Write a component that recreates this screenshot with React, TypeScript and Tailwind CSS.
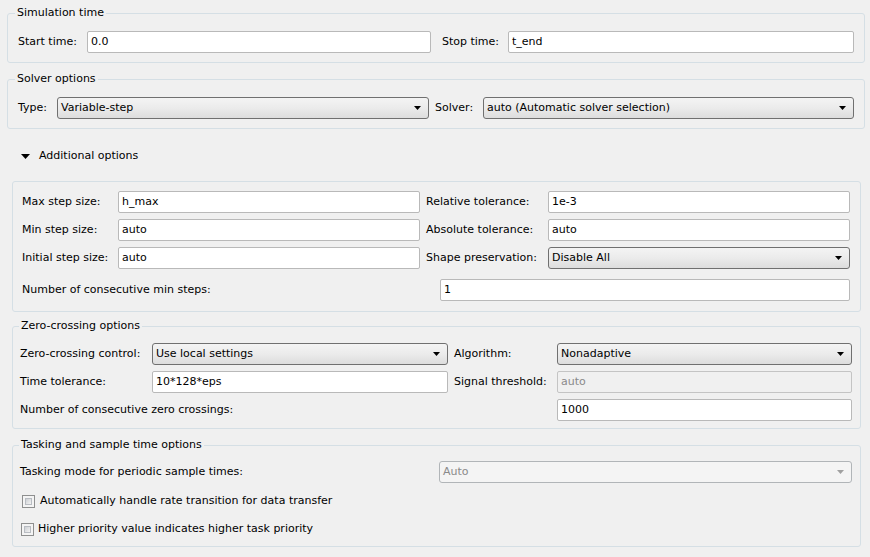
import React from 'react'

// Simulink-style solver configuration pane (Windows 7 look)

const TextBox = ({ value, disabled = false, className = '' }: { value: string; disabled?: boolean; className?: string }) => (
  <div
    className={`h-[22px] flex items-center pl-[3px] rounded-[2px] border ${
      disabled ? 'bg-[#f0f0f0] border-[#c4c4c4] text-[#8a8a8a]' : 'bg-white border-[#b9b9b9] text-black'
    } ${className}`}
  >
    {value}
  </div>
)

const Combo = ({ value, disabled = false, className = '' }: { value: string; disabled?: boolean; className?: string }) => (
  <div
    className={`h-[22px] flex items-center justify-between pl-[3px] pr-[7px] rounded-[3px] border ${
      disabled
        ? 'bg-[#f4f4f4] border-[#b1b5b8] text-[#8a8a8a]'
        : 'bg-gradient-to-b from-[#f4f4f4] via-[#ebebeb] to-[#dddddd] border-[#707070] text-black'
    } ${className}`}
  >
    <span>{value}</span>
    <svg width="7" height="4" viewBox="0 0 7 4">
      <polygon points="0,0 7,0 3.5,4" fill={disabled ? '#a0a0a0' : '#000000'} />
    </svg>
  </div>
)

const CheckBox = () => (
  <div className="w-[13px] h-[13px] border border-[#8e8f8f] bg-[#f4f4f4] p-[2px]">
    <div className="w-full h-full bg-gradient-to-br from-[#cdd0d4] to-[#f3f3f3] border border-[#b8bcc2]" />
  </div>
)

const Label = ({ children, className = '' }: { children: React.ReactNode; className?: string }) => (
  <div className={`h-[22px] flex items-center whitespace-nowrap ${className}`}>{children}</div>
)

export default function App() {
  return (
    <div className="w-[870px] h-[557px] overflow-hidden bg-[#f0f0f0] text-black text-[11px] font-['DejaVu_Sans',sans-serif] pt-[5px]">
      {/* Simulation time */}
      <fieldset className="ml-[7px] w-[858px] border border-[#d5dfe5] rounded-[3px]">
        <legend className="ml-[7px] px-[2px] leading-[16px]">Simulation time</legend>
        <div className="mt-[10px] pb-[9px] pl-[10px] pr-[10px] flex">
          <Label className="w-[69px]">Start time:</Label>
          <TextBox value="0.0" className="w-[344px]" />
          <Label className="w-[77px] pl-[11px]">Stop time:</Label>
          <TextBox value="t_end" className="flex-1" />
        </div>
      </fieldset>

      {/* Solver options */}
      <fieldset className="mt-[8px] ml-[7px] w-[858px] border border-[#d5dfe5] rounded-[3px]">
        <legend className="ml-[7px] px-[2px] leading-[16px]">Solver options</legend>
        <div className="mt-[10px] pb-[9px] pl-[10px] pr-[10px] flex">
          <Label className="w-[39px]">Type:</Label>
          <Combo value="Variable-step" className="w-[372px]" />
          <Label className="w-[54px] pl-[6px]">Solver:</Label>
          <Combo value="auto (Automatic solver selection)" className="flex-1" />
        </div>
      </fieldset>

      {/* Additional options toggle */}
      <div className="mt-[19px] ml-[21px] h-[16px] flex items-center gap-[9px]">
        <svg width="9" height="5" viewBox="0 0 9 5">
          <polygon points="0,0 9,0 4.5,5" fill="#000000" />
        </svg>
        <span>Additional options</span>
      </div>

      {/* Step size / tolerances */}
      <div className="mt-[17px] ml-[12px] w-[849px] border border-[#d5dfe5] rounded-[3px] pt-[9px] pb-[10px] pl-[9px] pr-[10px]">
        <div className="grid grid-cols-[96px_302px_128px_302px] gap-y-[6px]">
          <Label>Max step size:</Label>
          <TextBox value="h_max" />
          <Label className="pl-[6px]">Relative tolerance:</Label>
          <TextBox value="1e-3" />
          <Label>Min step size:</Label>
          <TextBox value="auto" />
          <Label className="pl-[6px]">Absolute tolerance:</Label>
          <TextBox value="auto" />
          <Label>Initial step size:</Label>
          <TextBox value="auto" />
          <Label className="pl-[6px]">Shape preservation:</Label>
          <Combo value="Disable All" />
        </div>
        <div className="mt-[10px] flex">
          <Label className="flex-1">Number of consecutive min steps:</Label>
          <TextBox value="1" className="w-[410px]" />
        </div>
      </div>

      {/* Zero-crossing options */}
      <fieldset className="mt-[6px] ml-[12px] w-[849px] border border-[#d5dfe5] rounded-[3px]">
        <legend className="ml-[6px] px-[2px] leading-[16px]">Zero-crossing options</legend>
        <div className="mt-[9px] pb-[7px] pl-[7px] pr-[8px] grid grid-cols-[132px_296px_109px_295px] gap-y-[6px]">
          <Label>Zero-crossing control:</Label>
          <Combo value="Use local settings" />
          <Label className="pl-[6px]">Algorithm:</Label>
          <Combo value="Nonadaptive" />
          <Label>Time tolerance:</Label>
          <TextBox value="10*128*eps" />
          <Label className="pl-[6px]">Signal threshold:</Label>
          <TextBox value="auto" disabled />
          <Label className="col-span-3">Number of consecutive zero crossings:</Label>
          <TextBox value="1000" />
        </div>
      </fieldset>

      {/* Tasking and sample time options */}
      <fieldset className="mt-[8px] ml-[12px] w-[849px] border border-[#d5dfe5] rounded-[3px]">
        <legend className="ml-[6px] px-[2px] leading-[16px]">Tasking and sample time options</legend>
        <div className="mt-[8px] pb-[6px] pl-[7px] pr-[8px]">
          <div className="flex">
            <Label className="flex-1">Tasking mode for periodic sample times:</Label>
            <Combo value="Auto" disabled className="w-[413px]" />
          </div>
          <div className="mt-[7px] h-[22px] flex items-center pl-[2px] gap-[5px]">
            <CheckBox />
            <span>Automatically handle rate transition for data transfer</span>
          </div>
          <div className="mt-[6px] h-[22px] flex items-center pl-[1px] gap-[4px]">
            <CheckBox />
            <span>Higher priority value indicates higher task priority</span>
          </div>
        </div>
      </fieldset>
    </div>
  )
}
